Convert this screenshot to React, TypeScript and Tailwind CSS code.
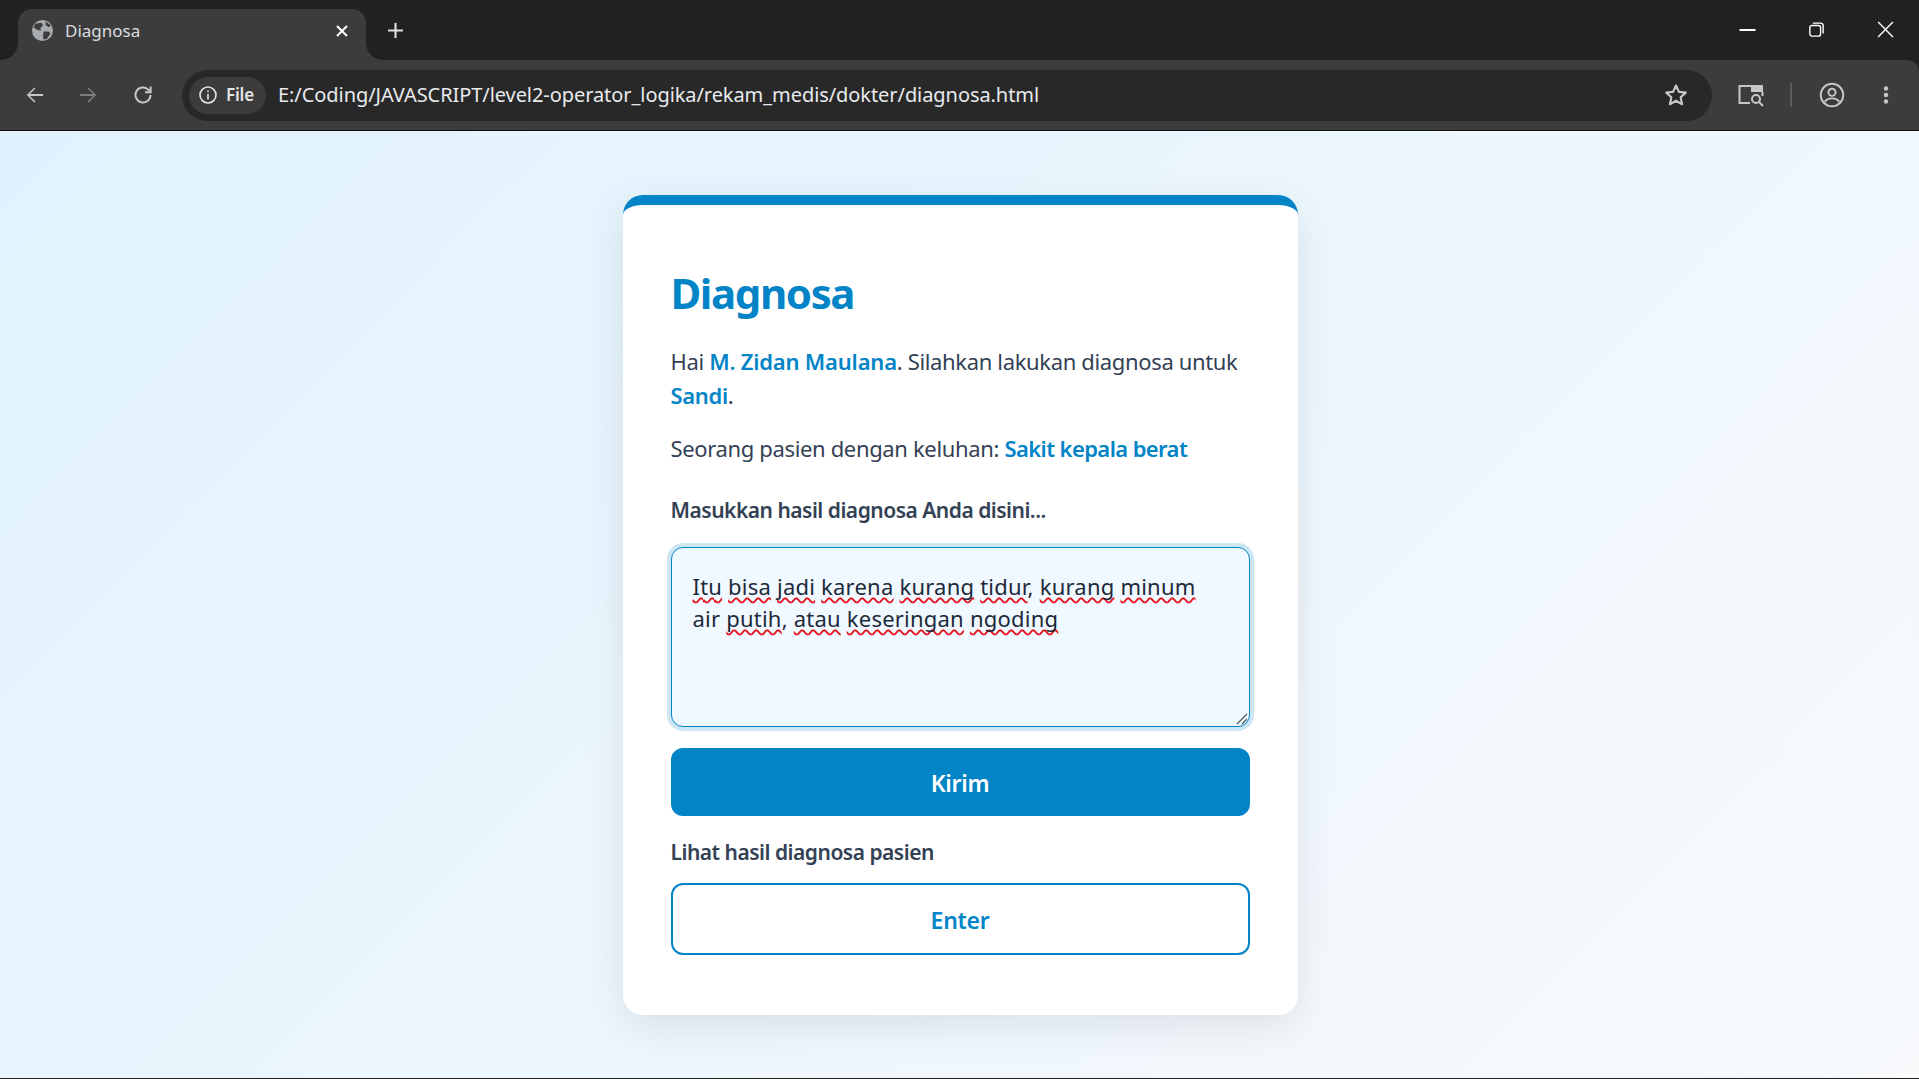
import React from "react";

const sq = "underline decoration-wavy decoration-[#e5161d] decoration-[1.5px] underline-offset-[2px] [text-decoration-skip-ink:none]";

function Corner({ side }: { side: "l" | "r" }) {
  return (
    <svg
      viewBox="0 0 18 18"
      className={"absolute bottom-0 w-[18px] h-[18px] " + (side === "l" ? "left-[-18px]" : "right-[-18px] -scale-x-100")}
    >
      <path d="M0 18C10 18 18 11 18 0V18Z" fill="#3c3c3c" />
    </svg>
  );
}

function Tab() {
  return (
    <div className="relative w-[348px] h-[51px] mt-[9px] ml-[18px] bg-[#3c3c3c] rounded-t-[14px] flex items-center pl-[14px] pr-[17px] pb-[8px]">
      <Corner side="l" />
      <Corner side="r" />
      <svg viewBox="0 0 20 20" className="w-[21px] h-[21px] shrink-0">
        <circle cx="10" cy="10" r="10" fill="#a8abaf" />
        <path d="M3 3.500 9 2.500 10.500 5 8 7.500 8.500 10 5 9.500 1.500 7ZM11 11 16 11 17.500 13 14 18 11 18.500 10.500 15Z M13 1.500 18 5 16 7 13 5Z" fill="#3c3c3c" />
      </svg>
      <span className="ml-[12px] text-[17px] text-[#dadce0] flex-1">Diagnosa</span>
      <svg viewBox="0 0 14 14" className="w-[14px] h-[14px] text-white" fill="none" stroke="currentColor" strokeWidth="2">
        <path d="M2 2 12 12M12 2 2 12" />
      </svg>
    </div>
  );
}

function Toolbar() {
  return (
    <div className="h-[70px] bg-[#3c3c3c] rounded-tr-[12px] flex items-center">
      <svg viewBox="0 0 24 24" className="w-[24px] h-[24px] ml-[23px] text-[#c7c7c7]" fill="currentColor">
        <path d="M20 11.100H6.900l5.600-5.600L11.400 4.400 3.800 12l7.600 7.600 1.100-1.100-5.600-5.600H20z" />
      </svg>
      <svg viewBox="0 0 24 24" className="w-[24px] h-[24px] ml-[29px] text-[#7e7e7e]" fill="currentColor">
        <path d="M4 11.100h13.100l-5.600-5.600 1.100-1.100 7.600 7.600-7.600 7.600-1.100-1.100 5.600-5.600H4z" />
      </svg>
      <svg viewBox="0 0 24 24" className="w-[24px] h-[24px] ml-[31px] text-[#c7c7c7]" fill="none" stroke="currentColor" strokeWidth="2">
        <path d="M19.500 12a7.500 7.500 0 1 1-2.300-5.400L19.500 9" />
        <path d="M19.600 3.500V9.200H14" />
      </svg>
      <div className="ml-[27px] w-[1530px] h-[51px] bg-[#282828] rounded-full flex items-center pl-[7px] pr-[23px] shrink-0">
        <div className="w-[77px] h-[37px] bg-[#3c3c3c] rounded-full flex items-center pl-[9px] shrink-0">
          <svg viewBox="0 0 20 20" className="w-[20px] h-[20px] text-[#e3e3e3]" fill="none" stroke="currentColor" strokeWidth="1.600">
            <circle cx="10" cy="10" r="8" />
            <path d="M10 9v5.500M10 5.500v1.800" />
          </svg>
          <span className="ml-[8px] text-[17px] font-semibold text-[#e3e3e3] tracking-[-0.2px]">File</span>
        </div>
        <span className="ml-[12px] text-[20px] text-[#e8eaed] flex-1 whitespace-nowrap tracking-[-0.07px]">
          E:/Coding/JAVASCRIPT/level2-operator_logika/rekam_medis/dokter/diagnosa.html
        </span>
        <svg viewBox="0 0 24 24" className="w-[26px] h-[26px] text-[#c7c7c7]" fill="none" stroke="currentColor" strokeWidth="2" strokeLinejoin="round">
          <path d="M12 3.200 14.700 9.100 21 9.800 16.300 14.100 17.600 20.500 12 17.300 6.400 20.500 7.700 14.100 3 9.800 9.300 9.100Z" />
        </svg>
      </div>
      <svg viewBox="0 0 28 24" className="w-[28px] h-[24px] ml-[25px] text-[#c7c7c7]" fill="none" stroke="currentColor" strokeWidth="2">
        <path d="M14 3H2.500v17H13" />
        <path d="M14 2H26v7H14z" fill="currentColor" stroke="none" />
        <path d="M25.500 9v4" />
        <circle cx="19" cy="16" r="4" />
        <path d="M22 19 26 23" />
      </svg>
      <div className="w-[2px] h-[24px] bg-[#5c5c5c] ml-[25px]" />
      <svg viewBox="0 0 24 24" className="w-[26px] h-[26px] ml-[27px] text-[#c7c7c7]" fill="none" stroke="currentColor" strokeWidth="1.800">
        <circle cx="12" cy="12" r="10.400" />
        <circle cx="12" cy="9.500" r="3.300" />
        <path d="M5.200 18.500c1.500-2.500 4-3.400 6.800-3.400s5.300.9 6.800 3.400" />
      </svg>
      <svg viewBox="0 0 6 24" className="w-[6px] h-[24px] ml-[38px] text-[#c7c7c7]" fill="currentColor">
        <circle cx="3" cy="5.500" r="2.200" />
        <circle cx="3" cy="12" r="2.200" />
        <circle cx="3" cy="18.500" r="2.200" />
      </svg>
    </div>
  );
}

function Chrome() {
  return (
    <div className="bg-[#202221] font-['Noto_Sans',sans-serif]">
      <div className="h-[60px] flex items-start">
        <Tab />
        <svg viewBox="0 0 16 16" className="w-[17px] h-[17px] mt-[22px] ml-[21px] text-[#dfdfdf]" fill="none" stroke="currentColor" strokeWidth="2">
          <path d="M8 1v14M1 8h14" />
        </svg>
        <div className="flex-1" />
        <svg viewBox="0 0 16 2" className="w-[17px] h-[2px] mt-[29px] text-white mr-[53px]" fill="currentColor">
          <rect width="16" height="2" />
        </svg>
        <svg viewBox="0 0 14 14" className="w-[15px] h-[15px] mt-[22px] text-white mr-[53px]" fill="none" stroke="currentColor" strokeWidth="1.300">
          <rect x="0.800" y="3.200" width="10" height="10" rx="2" />
          <path d="M3.500 1h7.300a2.400 2.400 0 0 1 2.400 2.400v7.300" />
        </svg>
        <svg viewBox="0 0 16 16" className="w-[17px] h-[17px] mt-[21px] text-white mr-[25px]" fill="none" stroke="currentColor" strokeWidth="1.300">
          <path d="M1 1 15 15M15 1 1 15" />
        </svg>
      </div>
      <Toolbar />
    </div>
  );
}

export default function App() {
  return (
    <div className="w-[1919px] h-[1079px] overflow-hidden flex flex-col bg-[#202221]">
      <Chrome />
      <div className="h-px bg-[#111]" />
      <main className="h-[947px] bg-[linear-gradient(135deg,#e0f2fe,#f8fafc)] flex items-center justify-center pl-[1px] font-['Noto_Sans',sans-serif] text-[#334155]">
        <section className="w-[675px] h-[820px] bg-white rounded-[20px] border-t-[10px] border-[#0284c7] shadow-[0_12px_40px_rgba(0,0,0,0.09)] px-[48px] pt-[58px]">
          <h1 className="text-[42px] leading-[60px] font-bold text-[#0284c7] tracking-[-1.4px]">Diagnosa</h1>
          <p className="mt-[21px] text-[22px] leading-[34px] tracking-[-0.35px]">
            Hai <b className="font-semibold text-[#0284c7] tracking-[-0.2px]">M. Zidan Maulana</b>. Silahkan lakukan diagnosa untuk <b className="font-semibold text-[#0284c7]">Sandi</b>.
          </p>
          <p className="mt-[19px] text-[22px] leading-[34px] tracking-[-0.35px]">
            Seorang pasien dengan keluhan: <b className="font-semibold text-[#0284c7] tracking-[-0.6px]">Sakit kepala berat</b>
          </p>
          <p className="mt-[28px] text-[21px] leading-[34px] font-semibold tracking-[-0.5px]">Masukkan hasil diagnosa Anda disini...</p>
          <div className="relative mt-[20px] h-[180px] rounded-[12px] border border-[#0284c7] bg-[#f0f9ff] ring-4 ring-[#0284c7]/20 px-[21px] pt-[22px] text-[22px] leading-[32px] text-[#1e293b] tracking-[0.22px]">
            <span className={sq}>Itu</span> <span className={sq}>bisa</span> <span className={sq}>jadi</span> <span className={sq}>karena</span> <span className={sq}>kurang</span> <span className={sq}>tidur</span>, <span className={sq}>kurang</span> <span className={sq}>minum</span>
            <br />
            air <span className={sq}>putih</span>, <span className={sq}>atau</span> <span className={sq}>keseringan</span> <span className={sq}>ngoding</span>
            <svg viewBox="0 0 12 12" className="absolute right-[1px] bottom-[1px] w-[12px] h-[12px] text-[#555]" fill="none" stroke="currentColor" strokeWidth="1.200">
              <path d="M1 11 11 1M6 11 11 6" />
            </svg>
          </div>
          <button className="block w-full h-[68px] mt-[21px] pt-[3px] rounded-[12px] bg-[#0284c7] text-white text-[23px] font-semibold tracking-[-0.3px]">Kirim</button>
          <p className="mt-[19px] text-[21px] leading-[34px] font-semibold tracking-[-0.5px]">Lihat hasil diagnosa pasien</p>
          <button className="block w-full h-[72px] mt-[14px] pt-[3px] rounded-[12px] border-[2.5px] border-[#0284c7] bg-white text-[#0284c7] text-[23px] font-semibold tracking-[-0.3px]">Enter</button>
        </section>
      </main>
      <div className="flex-1 bg-[#202221]" />
    </div>
  );
}
